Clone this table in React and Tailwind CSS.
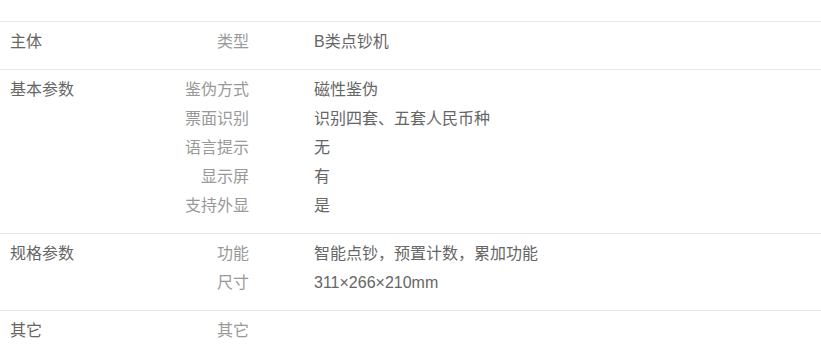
export default function App() {
  const groups = [
    { title: "主体", items: [["类型", "B类点钞机"]] },
    {
      title: "基本参数",
      items: [
        ["鉴伪方式", "磁性鉴伪"],
        ["票面识别", "识别四套、五套人民币种"],
        ["语言提示", "无"],
        ["显示屏", "有"],
        ["支持外显", "是"],
      ],
    },
    {
      title: "规格参数",
      items: [
        ["功能", "智能点钞，预置计数，累加功能"],
        ["尺寸", "311×266×210mm"],
      ],
    },
    { title: "其它", items: [["其它", ""]] },
  ];
  return (
    <div
      className="w-[821px] h-[363px] bg-white overflow-hidden pt-[21px] text-[16px] leading-[29px]"
      style={{ fontFamily: '"Liberation Sans", "Noto Sans CJK SC", sans-serif' }}
    >
      {groups.map((g, gi) => (
        <div
          key={gi}
          className="flex pt-[5px] pb-[13px] border-t border-[#e8e8e8]"
        >
          <div className="w-[130px] pl-[10px] text-[#666]">{g.title}</div>
          <div className="flex flex-col">
            {g.items.map(([k, v], i) => (
              <div key={i} className="flex h-[29px]">
                <div className="w-[119px] text-right text-[#999]">{k}</div>
                <div className="pl-[65px] text-[#666]">{v}</div>
              </div>
            ))}
          </div>
        </div>
      ))}
    </div>
  );
}
